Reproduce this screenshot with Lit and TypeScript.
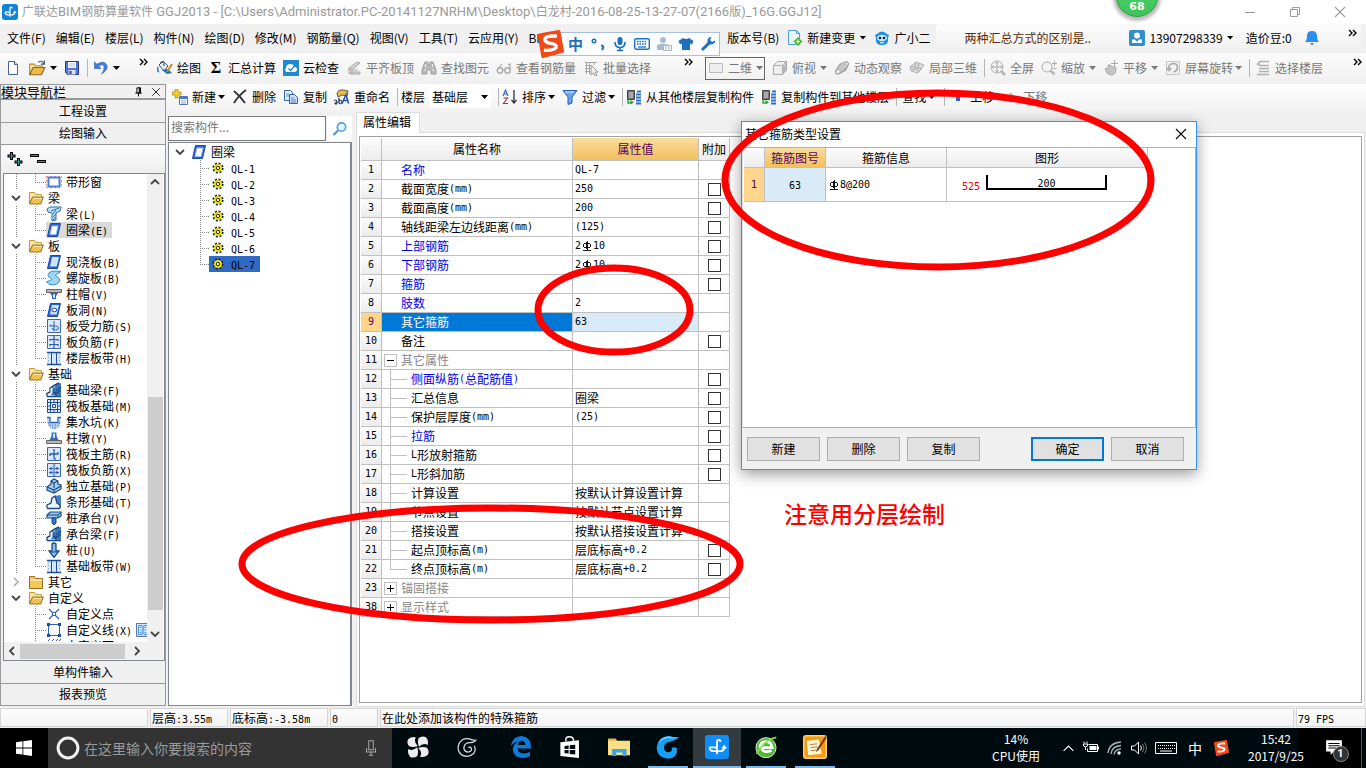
import { LitElement, html, svg, css, nothing } from "lit";
import { customElement } from "lit/decorators.js";
import { classMap } from "lit/directives/class-map.js";

const plate = svg`<path d="M1.500 1.500h13v13h-13z" fill="#dbe8fb" stroke="#3a66c4"/>`;
const folderOpen = svg`<path d="M1.500 14V2.500h5l1 2h6v3" fill="#ffe9a0" stroke="#c29a3f"/><path d="M1.500 14l3-7h11l-3 7z" fill="#f0c050" stroke="#9a7020"/><path d="M5 8.500h8.500" stroke="#ffe9a0"/>`;
const slant = svg`<path d="M4.500 1.500h10l-3 13h-10z" fill="#2b63cc" stroke="#1d4aa8"/>`;
const beam3d = svg`<path d="M5 13l5-11 5-1v13z" fill="#3f76b5"/><path d="M1 14.500h14M1 14.500v-3l3-1.500V6l3-2v6l3 1.500v3M7 4l6-3M10 9l5-4M10 11.500l5-3" fill="none" stroke="#174a86" stroke-width="1.400"/><path d="M4.500 7l2-1.500v6h-2z" fill="#cfe4fb"/>`;
const strip = svg`<path d="M1 3h14v11H1z" fill="#d6e6fb"/><path d="M1 2.500h14M1 14.500h14" stroke="#1c4da0" stroke-width="1.500"/><path d="M5.500 3v11M10.500 3v11" stroke="#1c4da0"/><path d="M2.500 4v9M13.500 4v9" stroke="#7ea4dc" stroke-dasharray="1 2"/>`;
const copyStack = svg`<path d="M1.500 1.500h7v9h-7z" fill="#777" stroke="#444"/><path d="M3 4h4M3 6h4M3 8h4" stroke="#ddd"/><path d="M15 2.500h-4M15 5.500h-5M15 8.500h-5M15 11.500h-5M15 14.500h-5" stroke="#2d6fc4" stroke-width="1.800"/><path d="M4 11l4 2-3 2.500z" fill="#2bab36"/><path d="M2 11v3h3" stroke="#2bab36" stroke-width="1.500" fill="none"/>`;
const hookMark = svg`<path d="M10.300 4.500Q10.300 3.200 9.200 3.200 8 3.200 8 4.500V12.800M3 8.200h3.500Q8 8.200 8 9.500M3 8.200Q3.200 10.800 5.500 10.800h5Q12.800 10.600 12.800 8M11.500 9l1.300-1.500L14 9" fill="none" stroke="#fff" stroke-width="1.200"/>`;

const ICONS: Record<string, unknown> = {
  app: svg`<rect width="16" height="16" rx="3" fill="#0f83d8"/>${hookMark}`,
  page: svg`<path d="M3.500 1.500h6l3 3v10h-9z" fill="#fff" stroke="#44618f"/><path d="M9.500 1.500v3h3" fill="#cfdcf0" stroke="#44618f"/>`,
  open: svg`<path d="M1.500 14V4.500h4l1 1.500h6v2" fill="#ffe591" stroke="#b38a36"/><path d="M1.500 14l3-6.500h10.500l-3 6.500z" fill="#efb94a" stroke="#8b6620"/><path d="M9 3q3-2.500 5 1M14.500 1v3.500h-3" fill="none" stroke="#3c567f"/>`,
  save: svg`<path d="M1.500 1.500h13v13h-11l-2-2z" fill="#5472d8" stroke="#263a94"/><path d="M4 2h8v6H4z" fill="#f4f7ff"/><path d="M5 4h6M5 6h6" stroke="#b9c4e8"/><path d="M4.500 10h7v4.500h-7z" fill="#dfe4f0"/><path d="M5.500 11h2v3h-2z" fill="#263a94"/>`,
  undo: svg`<path d="M1.500 2v6.500h6.500L5.800 6.300Q9.500 3.300 11 6q1 3.500-2.500 8Q15 10 14 5.500 11-.5 4 4.300z" fill="#3f7fe0" stroke="#2558b5" stroke-width=".6"/>`,
  paint: svg`<path d="M2 5l4-4 5 5-4 5z" fill="#e8eef8" stroke="#35537f"/><path d="M1 7q-1 4 1 5" fill="none" stroke="#3171c8" stroke-width="1.500"/><path d="M5 10l5 4 5-1-4-4z" fill="#2b63b4"/><path d="M15 4l-5 8" stroke="#b99027" stroke-width="2"/><path d="M3 3q4-3 4 3" stroke="#333" fill="none"/>`,
  cloud: svg`<path d="M0 0h16v16H0z" fill="#1e88d2"/><path d="M3.500 12Q.8 10.500 3 8q0-4 4.500-4 3 0 3.500 3 3.500 0 3 3-.5 2-2.500 2z" fill="#fff"/><path d="M5.500 8.500l2 2 3.500-4" stroke="#1e88d2" fill="none" stroke-width="1.200"/>`,
  slab: svg`<path d="M2 9l9-7 3 1-7 6zM3 10h9M4 12h10v2H4zM3 10v4M6 10v4" fill="#d4d4d4" stroke="#a8a8a8"/>`,
  bino: svg`<path d="M4 2h3v3h2V2h3l3 8v4h-5v-4H6v4H1v-4z" fill="#b9b9b9" stroke="#9c9c9c"/><path d="M3 10h2M11 10h2M4.500 4v3M11.500 4v3" stroke="#eee"/>`,
  glasses: svg`<circle cx="4" cy="10.500" r="2.700" fill="none" stroke="#aaa" stroke-width="1.400"/><circle cx="11.500" cy="10.500" r="2.700" fill="none" stroke="#aaa" stroke-width="1.400"/><path d="M6.500 10q1-1 2.500 0M2 9l4-5M14 10V4l-2 1" fill="none" stroke="#aaa" stroke-width="1.200"/>`,
  batch: svg`<path d="M2 2.500h12M2 5.500h5M2 8.500h5M2 11.500h5M3.500 2v12M6.500 2v12M11 3v2" stroke="#a5a5a5"/><path d="M8 5l7 7-3 .2 2 3-1.500.8-2-3L8 15z" fill="#eee" stroke="#999"/>`,
  plane: svg`<path d="M1.500 3.500h13v9h-13z" fill="#eee" stroke="#bbb"/>`,
  cube: svg`<path d="M1.500 5.500l4-4h9v9l-4 4h-9z" fill="#eee" stroke="#aaa"/><path d="M1.500 5.500h9v9M10.500 5.500l4-4" fill="none" stroke="#aaa"/><path d="M11 6l3-3v8l-3 3z" fill="#bbb"/>`,
  orbit: svg`<circle cx="8.500" cy="7.500" r="5" fill="#bdbdbd"/><ellipse cx="8" cy="8" rx="8" ry="3" transform="rotate(-42 8 8)" fill="none" stroke="#a4a4a4" stroke-width="1.300"/><path d="M5 8l5-5M7 10l5-5" stroke="#e8e8e8"/>`,
  part3d: svg`<path d="M1 7l6-5 8 3-6 8-7-2z" fill="#ddd" stroke="#b0b0b0"/><path d="M7 2l-1 5-5 0M6 7l4 5M10 3L9 8l4 1M3 10l6-2" fill="none" stroke="#aaa"/>`,
  full: svg`<circle cx="7" cy="7" r="6" fill="#f4f4f4" stroke="#aaa"/><path d="M7 2v10M2 7h10M5.500 3.500L7 2l1.500 1.500M5.500 10.500L7 12l1.500-1.500M3.500 5.500L2 7l1.500 1.500M10.500 5.500L12 7l-1.500 1.500" fill="none" stroke="#aaa"/><path d="M11 11l4 4" stroke="#b5b5b5" stroke-width="2.500"/>`,
  zoom: svg`<circle cx="6" cy="7" r="5" fill="#f4f4f4" stroke="#aaa"/><path d="M9.500 10.500l4 4" stroke="#b5b5b5" stroke-width="2.500"/><path d="M11 3.500h5M13.500 1v5M11.500 8.500h4" stroke="#aaa"/>`,
  hand: svg`<path d="M2 9q2-2 3 0V5q2-1 2 1 2-1 3 1 3-1 3 2 0 6-5 6-4 0-6-6z" fill="#c4c4c4" stroke="#aaa"/><path d="M11.500 0v7M8 3.500h7" stroke="#aaa"/>`,
  rotate: svg`<path d="M1.500 1.500h13v13h-13z" fill="#f2f2f2" stroke="#c4c4c4"/><path d="M4 9q-1-5 4-5.500 5 0 4.500 4.500-.5 3-4 4M1.500 8L4 10.500 6.500 8" fill="none" stroke="#aaa" stroke-width="1.700"/>`,
  floors: svg`<path d="M2 4.500l3-3h9M4 5.500h10M4 8.500h10M4 11.500h10M2 14.500h12M2 4.500h3" fill="none" stroke="#b0b0b0" stroke-width="1.500"/>`,
  add: svg`<path d="M3 0h3v3h3v3H6v3H3V6H0V3h3z" fill="#f5cf30" stroke="#a2811a" stroke-width=".7"/><path d="M7.500 7.500h8v8h-8z" fill="#fff" stroke="#5474ae"/><path d="M8 8h7v2H8z" fill="#4a7edc"/><path d="M9 12h5M9 14h5" stroke="#8aa2cc"/>`,
  del: svg`<path d="M2 2q6 5 11 12M14 1Q7 6 2 14" fill="none" stroke="#333" stroke-width="1.800"/>`,
  copy: svg`<path d="M1.500 1.500h6l2 2v8h-8z" fill="#e6efff" stroke="#3462b5"/><path d="M6.500 5.500h5l3 3v6h-8z" fill="#cfe0ff" stroke="#3462b5"/><path d="M3 5h3M3 7h3M8 9h3M8 11h5M8 13h5" stroke="#5d86d0"/>`,
  rename: svg`<path d="M3 4q2-4 6-3l5 1-1 5-5-1-4 2z" fill="#e8bb55" stroke="#6d5424"/><path d="M5 9v5M8 14.500l4-9 2.500 9M9.500 11.500h4" fill="none" stroke="#2856ad" stroke-width="1.600"/><path d="M0 12q2-2 3 0v3H1q-1-1 2-2M5 12q3-2 3 1t-3 1" fill="none" stroke="#222"/>`,
  filter: svg`<path d="M1 1.500h14L10 8v6l-4 1.500V8z" fill="#6ba5ee" stroke="#2360b4"/><path d="M3 3h9" stroke="#d4e7ff"/>`,
  sort: svg`<path d="M1 7l2.500-6L6 7M2 5h3" fill="none" stroke="#2c5fc4" stroke-width="1.100"/><path d="M12 1v12M9.500 11l2.500 3 2.500-3" fill="none" stroke="#333" stroke-width="1.300"/><path d="M1.500 9h4L1.500 14.500h4.500" stroke="#a42f4e" fill="none" stroke-width="1.100"/>`,
  fromFloor: copyStack,
  toFloor: copyStack,
  up: svg`<path d="M8 2l5 5h-3v5H6V7H3z" fill="#2f62cc"/>`,
  down: svg`<path d="M8 14l5-5h-3V4H6v5H3z" fill="#c4c4c4"/>`,
  newDoc: svg`<path d="M1.500.5h8l3 3v11h-11z" fill="#e9f6ff" stroke="#4da0cf"/><path d="M9.500.5v3h3" fill="none" stroke="#4da0cf"/><path d="M11 7l4.500 4.500L11 16l-4.500-4.500z" fill="#50b830"/><path d="M11 9.500v4M9 11.500h4" stroke="#eaffdf" stroke-width="1.200"/>`,
  mascot: svg`<path d="M3 4q5-5 10 0l2 1-1 3q1 7-6 7T2 8L1 5z" fill="#1d8fe0"/><ellipse cx="8" cy="8" rx="5" ry="3.300" fill="#c9ecff"/><circle cx="6" cy="8" r="1.300" fill="#123"/><circle cx="10" cy="8" r="1.300" fill="#123"/><path d="M6 12.500q2 1 4 0" stroke="#fff" fill="none"/>`,
  user: svg`<rect width="16" height="16" rx="2" fill="#2f8fcb"/><circle cx="8" cy="5.500" r="3" fill="#fff"/><path d="M3 13V9.500h3L8 12l2-2.500h3V13z" fill="#fff"/>`,
  bell: svg`<path d="M8 1q5 0 5 5 0 4 2 6H1q2-2 2-6 0-5 5-5z" fill="#2a8df0"/><path d="M6 13h4l-2 2.500z" fill="#2a8df0"/>`,
  search: svg`<circle cx="9.500" cy="6" r="4.200" fill="#eaf5ff" stroke="#53a3dc" stroke-width="1.700"/><path d="M6 9.500L1.500 14" stroke="#4a94d0" stroke-width="2.200"/>`,
  plus2: svg`<path d="M4.500 1v8M.5 5h8M11.500 7v8M7.500 11h8" stroke="#000" stroke-width="3"/><path d="M4.500 2v6M1.500 5h6M11.500 8v6M8.500 11h6" stroke="#2a9d97"/>`,
  minus2: svg`<path d="M0 4.500h9M7 10.500h9" stroke="#000" stroke-width="3"/><path d="M1 4.500h7M8 10.500h7" stroke="#2a9d97"/>`,
  folderOpen,
  folder: svg`<path d="M1.500 14.500v-12h5l1 2h7v10z" fill="#f3c75a" stroke="#9a7020"/><path d="M2 6h12" stroke="#ffeeb0" stroke-width="1.500"/>`,
  window: svg`<path d="M.5 2v12M15.500 2v12M0 2.500h16M0 13.500h16" stroke="#ef8f86" stroke-dasharray="2 2"/><path d="M2.500 3.500h11v9h-11z" fill="#fff" stroke="#4b7fd8" stroke-width="2"/>`,
  beam: svg`<path d="M1 3l3-2h11l-1 4-4 2v7l-4 1V7L2 6z" fill="#bfe0f8" stroke="#2a6cae"/><path d="M5 5l8-3M7 8l3-4M7 11l3-3M7 14l3-3" stroke="#2a6cae"/>`,
  ring: svg`${slant}<path d="M6 4h6l-2 8.500H4z" fill="#fff" stroke="#9cc0f4"/>`,
  panel: svg`${slant}<path d="M6 3h7l-2.300 9.500H4z" fill="#cfe5fd"/>`,
  spiral: svg`<path d="M15 1.500Q6 0 3 3q-2.500 3 1.500 5 3 1.500-1 2.500L.5 12q4 4.500 10 2 6-4 1-7-3.500-1.500-1-3 2-1 4.500-2.500z" fill="#9ed6f6" stroke="#2f8dcb"/>`,
  cap: svg`<path d="M.5 3.500h15v3H.5z" fill="#b8b8b8" stroke="#666"/><path d="M4 7h8l-2 3v3H6v-3z" fill="#2760c4"/><path d="M7 8h2v4H7z" fill="#d5e6ff"/>`,
  hole: svg`${slant}<path d="M6 3h7l-2.300 9.500H4z" fill="#cfe5fd"/><ellipse cx="8.300" cy="8" rx="2.500" ry="1.800" fill="#fff" stroke="#1d4aa8"/>`,
  rebarS: svg`${plate}<path d="M8 3v10M5 6.500L3.500 8h6q3 0 3 2t-3 2M9 12q-3 0-3-2" fill="none" stroke="#2857b8"/>`,
  rebarF: svg`${plate}<path d="M8 2v12M4 5.500h8M4 10.500h8M4 5v2M12 5v2M4 10v2M12 10v2" fill="none" stroke="#2857b8" stroke-width="1.200"/>`,
  rebarR: svg`${plate}<path d="M8 3v9q0 1 2 1M4 10V8h8V6" fill="none" stroke="#2857b8" stroke-width="1.300"/>`,
  rebarX: svg`${plate}<path d="M8 2v12M3 6.500h10M3 10.500h10M5 5v3M11 5v3M5 9v3M11 9v3" fill="none" stroke="#2857b8" stroke-width="1.200"/><path d="M6.500 2h3v12h-3z" fill="#88a8d8" opacity=".6"/>`,
  strip,
  beam3d,
  raft: svg`<path d="M1.500 1.500h13v13h-13zM1 4.500h14M1 11.500h14M4.500 1v14M11.500 1v14M6.500 6.500h3v3h-3zM8 1v3M8 12v3M1 8h3M12 8h3" fill="#e2eefc" stroke="#1c4da0"/>`,
  pit: svg`<path d="M1 4h3v4h8V4h3q0 10-7 10T1 4z" fill="#bcd9f8"/><path d="M1 3.500h3v5h8v-5h3" fill="none" stroke="#2f62b8" stroke-width="1.300"/><path d="M2 8q1 6.500 6 6.500T14 8" fill="none" stroke="#2f62b8" stroke-dasharray="1.500 1"/><path d="M4 11h8M6 13h4" stroke="#2f62b8" stroke-dasharray="1 1.500"/>`,
  pier: svg`<path d="M.5 10.500h15v3H.5z" fill="#b8b8b8" stroke="#666"/><path d="M3.500 10l2-4V2.500h5V6l2 4z" fill="#2f6cd0"/><path d="M7 3.500h2V8H7z" fill="#d5e6ff"/>`,
  isolated: svg`<path d="M1 9l4-3V3l3-2 4 2v3l3 1v4l-7 4-7-3z" fill="#a8cdf2" stroke="#174a86" stroke-width="1.200"/><path d="M5 3l3 2v5M8 5l4-2M1 9l7 3 7-4M8 12v3" fill="none" stroke="#174a86" stroke-width="1.200"/>`,
  stripBase: svg`<path d="M9 2l5-1 1 1v12h-3z" fill="#4a80bd"/><path d="M1 14.500h13M1 14v-3l4-2 1-5 3-2 2 7 3 2v3" fill="#eaf3ff" stroke="#174a86" stroke-width="1.300"/>`,
  pileCap: svg`<path d="M1 5l3-3h11v4l-3 2H1z" fill="#9cc6f0" stroke="#174a86" stroke-width="1.200"/><path d="M1 5h11v3M12 5l3-3" fill="none" stroke="#174a86"/><path d="M6 8h4v5l-2 2-2-2z" fill="#3a76b9" stroke="#174a86"/>`,
  pile: svg`<path d="M6 2q2-2 4 0v7h3l-5 6.500L3 9h3z" fill="#8fbdec" stroke="#174a86" stroke-width="1.300"/><path d="M4 10h8" stroke="#174a86"/>`,
  point: svg`<path d="M3 3l10 10M13 3L3 13" stroke="#2b62c0" stroke-width="1.200"/><circle cx="8" cy="8" r="1.700" fill="#fff" stroke="#2b62c0"/>`,
  line: svg`<path d="M3 2.500h10M3 13.500h10M2.500 3v10M13.500 3v10" stroke="#2b62c0"/><path d="M1 1h3v3H1zM12 1h3v3h-3zM1 12h3v3H1zM12 12h3v3h-3z" fill="#1c4da0"/>`,
  face: svg`<path d="M2 3l2-2M6 3l2-2M10 3l2-2M13 3l2-2" stroke="#2b62c0"/>`,
  gear: svg`<circle cx="8" cy="8" r="5.300" fill="none" stroke="#222" stroke-width="4.400" stroke-dasharray="2.300 1.860"/><circle cx="8" cy="8" r="4.300" fill="#f4e800" stroke="#e8dc00" stroke-width="2"/><circle cx="8" cy="8" r="2.200" fill="#fff7a0" stroke="#222" stroke-width="1.300"/>`,
  mini: svg`<path d="M.5.5h15v15H.5z" fill="#cfe5ff" stroke="#3c5f9a"/><path d="M3 3h4v10H3zM9 3h4v10H9z" fill="#fff" stroke="#2a7fe0"/><path d="M4 5h2M4 8h2M4 11h2M10 5h2M10 8h2M10 11h2" stroke="#2a7fe0"/>`,
  pin: svg`<path d="M6 3.500h4v6H6zM9 3.500h1.500v6H9zM4 10h8M8 10v4" fill="none" stroke="#000" stroke-width="1.200"/>`,
  close: svg`<path d="M3 3l10 10M13 3L3 13" stroke="currentColor" stroke-width="1.100"/>`,
  minimise: svg`<path d="M3 8.500h10" stroke="currentColor"/>`,
  restore: svg`<path d="M3.500 5.500h7v7h-7zM5.500 5.500v-2h7v7h-2" fill="none" stroke="currentColor"/>`,
  chevDown: svg`<path d="M4 6l4 4 4-4" fill="none" stroke="#444" stroke-width="1.800"/>`,
  chevUp: svg`<path d="M4 10l4-4 4 4" fill="none" stroke="#444" stroke-width="1.800"/>`,
  chevLeft: svg`<path d="M10 4L6 8l4 4" fill="none" stroke="#444" stroke-width="1.800"/>`,
  chevRight: svg`<path d="M6 4l4 4-4 4" fill="none" stroke="#444" stroke-width="1.800"/>`,
  chevClosed: svg`<path d="M6 4l4 4-4 4" fill="none" stroke="#aaa" stroke-width="1.500"/>`,
  rebar: svg`<path d="M3 3.500h6M3 7.500h6M2.500 4v3M9.500 4v3M6.500 1v9M5.500 2v7M2 10.500h8" fill="none" stroke="#000" stroke-width=".9"/>`,
  more: svg`<path d="M4 3l3 3-3 3M8 3l3 3-3 3" fill="none" stroke="#000" stroke-width="1.400"/>`,
  // input method bar
  sogou: svg`<path d="M2 3l11-2 2 11-11 3z" fill="#f04a16" stroke="#f04a16" stroke-linejoin="round" stroke-width="2"/><path d="M12 3.500Q5 3 5 5.800 6 7.500 9 7.800q3 .4 2.500 2.200Q10 12 4.500 11.500" fill="none" stroke="#fff" stroke-width="1.900"/>`,
  punct: svg`<circle cx="4" cy="5" r="1.800" fill="none" stroke="#1f6fbf" stroke-width="1.400"/><path d="M11 9.500q4 0 1 4.500" fill="none" stroke="#1f6fbf" stroke-width="2.200"/>`,
  mic: svg`<rect x="5.500" y="1" width="5" height="8" rx="2.500" fill="#1f6fbf"/><path d="M3 6q0 5.500 5 5.500T13 6M8 11v4M5 14.500h6" fill="none" stroke="#1f6fbf" stroke-width="1.600"/>`,
  keys: svg`<rect x=".7" y="2.700" width="14.600" height="10.600" rx="1.500" fill="none" stroke="#1f6fbf" stroke-width="1.400"/><path d="M3 5.500h10M3 8h10" stroke="#1f6fbf" stroke-width="1.500" stroke-dasharray="1.500 1"/><path d="M4 11h8" stroke="#1f6fbf" stroke-width="1.300"/>`,
  person: svg`<circle cx="7" cy="4" r="3" fill="#a9bbd0"/><path d="M1 14V9q6-3 12 0v5z" fill="#a9bbd0"/><path d="M7.500 9.500h8v5h-8z" fill="#fff" stroke="#a9b5c4"/><path d="M10 10.500v3M13 10.500v3" stroke="#8897a8"/>`,
  shirt: svg`<path d="M5 2q3 2 6 0l4.500 3L14 8.500l-2-1V14H4V7.500l-2 1L.5 5z" fill="#1f6fbf"/>`,
  wrench: svg`<path d="M2 14l7-7" stroke="#1f6fbf" stroke-width="3"/><path d="M9 1.500Q6.500 4 8 8q4 1.500 7-1.500l0-2-3 1.500-2-2L11.500 1z" fill="#1f6fbf"/>`,
  // taskbar
  win: svg`<path d="M0 2.200L6.500 1.300v6.200H0zM7.300 1.200L16 0v7.500H7.300zM0 8.400h6.500v6.200L0 13.700zM7.300 8.400H16V16l-8.700-1.200z" fill="#fff"/>`,
  ringO: svg`<circle cx="8" cy="8" r="6.600" fill="none" stroke="#f2f2f2" stroke-width="2"/>`,
  micLine: svg`<path d="M6 1.500h4v8H6zM4 8v3.500h8V8M8 11.500v3M6 14.500h4" fill="none" stroke="#aaa" stroke-width=".9"/>`,
  clover: svg`<g fill="#ececec"><path d="M7.800 7.300Q4.500 8.700 1.500 7.500-.5 5 .8 2.300 3.500 0 6.500 1q-2 3 1.300 6.300z"/><path d="M8.700 7.800Q7.300 4.500 8.500 1.500 11-.5 13.700.8 16 3.500 15 6.500q-3-2-6.300 1.300z"/><path d="M8.200 8.700Q11.500 7.300 14.500 8.500q2 2.500.7 5.200-2.700 2.300-5.700 1.300 2-3-1.300-6.300z"/><path d="M7.300 8.200Q8.700 11.500 7.500 14.500 5 16.500 2.300 15.200 0 12.500 1 9.500q3 2 6.300-1.300z"/></g>`,
  swirl: svg`<path d="M15.500 2.500Q13.500 4.500 10.500 4.500 6 4.500 5.500 8.500q.2 3.500 3.500 3.500 3-.3 2.500-3-1-1.500-2.500-.5M15.500 2.500Q13 3 10 1.500 4 .5 1.500 5.500-.5 11 4 14.500q5.500 2.500 9.500-1.500 2-3 .2-6" fill="none" stroke="#d8dddd"/>`,
  swirlBlue: svg`<path d="M15.500 1.500Q12 4 9.500 4.500 6 4.800 5.300 8q0 3.500 3 3.500 2.800-.3 2.300-3 2-1 3.400.5Q14.500 15.500 8 15.800.5 15 .5 8 1.500.5 9 .8q3.500 1 6.500.7z" fill="#17a0f5"/><path d="M9 .8q-6 0-7.500 5 3-4 8.500-3.500 3 0 5.500-.8-3.500.5-6.500-.7z" fill="#6ad0ff"/>`,
  edge: svg`<path d="M.5 7.500Q2 0 8.500 0 15.500.8 15.300 9H5.500q.5 3.500 4.500 3.700 2.500 0 4.500-1.200v3.300Q12 16 9 16 2.500 15.500 2 9.800 2.300 6 6 4 2.500 4.500.5 7.500zM5.700 6.500h5.500Q11 3.600 8.500 3.500 6 3.700 5.700 6.500z" fill="#0c7bdc"/>`,
  store: svg`<path d="M1 4.500L14.500 3v13L1 14.500z" fill="#fff"/><path d="M5 4V2.500Q5 .5 7.500.5t3 2V4" fill="none" stroke="#fff"/><path d="M4 7.200l3-.3v2.500H4zM7.800 6.800l4-.4v3h-4zM4 10.200h3v2.600l-3-.3zM7.800 10.200h4v3.200l-4-.4z" fill="#000b0f"/>`,
  explorer: svg`<path d="M0 14V2h5.500l1 1.500H16V14z" fill="#fbdf86"/><path d="M0 2h5.500l1 1.500H0z" fill="#e8b84a"/><path d="M3 14.500V9.500h10.500v5h-3v-2.500h-4.500v2.500z" fill="#3aa5de"/>`,
  cad: svg`<rect width="16" height="16" rx="2" fill="#0f8cf5"/>${hookMark}`,
  green: svg`<circle cx="8" cy="8.500" r="7.300" fill="#4db834" stroke="#d6f5c8" stroke-width=".7"/><path d="M3.500 8.500Q4 4 8 4t4.500 4.500h-8Q6 13 12 10.500" fill="none" stroke="#fff" stroke-width="2"/><path d="M1 13Q8 2 15.500 1" fill="none" stroke="#8ede50" stroke-width="1.200"/>`,
  note: svg`<rect x=".5" y=".5" width="15" height="15" rx="1.500" fill="#f59a13" stroke="#ffd36b"/><path d="M2.500 4l8-1 2 9.500-9 1z" fill="#fff6d8"/><path d="M4.500 6.500l5-.6M5 8.500l5-.6M5 10.500l4-.5" stroke="#b58a4a" stroke-width=".7"/><path d="M15 .5L9.500 9l-1 2.500 2-1.500L15.700 2z" fill="#8a3412"/>`,
  trayUp: svg`<path d="M2 11l6-6 6 6" fill="none" stroke="#fff" stroke-width="1.400"/>`,
  battery: svg`<path d="M5.500 4.500h9v7H4.500v-3M15.500 6.500v3M1 1.500v2M4 1.500v2M.5 4h4v2q-2 2-4 0zM2.500 7v3" fill="none" stroke="#fff"/><path d="M6.500 6h7v4h-7z" fill="#fff"/>`,
  wifi: svg`<path d="M1 13Q2 3 14 2M4 14Q5 6 14 5.500M7 14.500Q8 9 14 8.800" fill="none" stroke="#aeb7b8" stroke-width="1.300"/><circle cx="12" cy="13" r="1.700" fill="#fff"/>`,
  sound: svg`<path d="M.5 6h3l4-4v12l-4-4h-3z" fill="none" stroke="#fff"/><path d="M9.500 5.500q2 2.500 0 5" fill="none" stroke="#fff"/><path d="M11.500 4q3 4 0 8M13.500 2.500q4 5.500 0 11" fill="none" stroke="#777"/>`,
  trayKeys: svg`<path d="M.5 2.500h21v11H.5zM5 11h12" fill="none" stroke="#fff"/><path d="M3 5.500h17M3 8.500h17" stroke="#fff" stroke-dasharray="1 1"/>`,
  action: svg`<path d="M1 1h14v10H8l-3 3v-3H1z" fill="#fff"/><path d="M3 4h10M3 6h10M3 8h7" stroke="#000" stroke-width=".9"/>`,
};

const ic = (name: string, size = 16, vb = "0 0 16 16", w = size) =>
  html`<svg class="ic" width=${w} height=${size} viewBox=${vb} aria-hidden="true">${ICONS[name]}</svg>`;

// Latin runs are set in the half-width monospaced face, ⌀ stands for the rebar grade sign.
const t = (s: string) =>
  s.split(/([\x20-\x7e]+|⌀)/).map((p) =>
    p === "" ? nothing : p === "⌀" ? ic("rebar", 12, "0 0 12 12") : /^[\x20-\x7e]/.test(p) ? html`<span class="m">${p}</span>` : p,
  );

type Tool = { i?: string; l?: string; a?: boolean; off?: boolean; sep?: boolean; tight?: boolean };

const MENU = ["文件(F)", "编辑(E)", "楼层(L)", "构件(N)", "绘图(D)", "修改(M)", "钢筋量(Q)", "视图(V)", "工具(T)", "云应用(Y)", "BIM应用(I)", "在线服务(S)", "帮助(H)", "版本号(B)"];

const DRAW_TOOLS: Tool[] = [
  { i: "paint", l: "绘图" }, { i: "sum", l: "汇总计算" }, { i: "cloud", l: "云检查" },
  { i: "slab", l: "平齐板顶", off: true }, { i: "bino", l: "查找图元", off: true },
  { i: "glasses", l: "查看钢筋量", off: true }, { i: "batch", l: "批量选择", off: true },
];
const VIEW_TOOLS: Tool[] = [
  { i: "cube", l: "俯视", a: true, off: true }, { i: "orbit", l: "动态观察", off: true }, { i: "part3d", l: "局部三维", off: true },
  { sep: true }, { i: "full", l: "全屏", off: true }, { i: "zoom", l: "缩放", a: true, off: true },
  { i: "hand", l: "平移", a: true, off: true }, { i: "rotate", l: "屏幕旋转", a: true, off: true, tight: true },
  { sep: true }, { i: "floors", l: "选择楼层", off: true },
];
const ITEM_TOOLS: Tool[] = [
  { i: "add", l: "新建", a: true, tight: true }, { i: "del", l: "删除" }, { i: "copy", l: "复制" }, { i: "rename", l: "重命名" }, { sep: true },
];
const LIST_TOOLS: Tool[] = [
  { sep: true }, { i: "sort", l: "排序", a: true, tight: true }, { i: "filter", l: "过滤", a: true, tight: true }, { sep: true },
  { i: "fromFloor", l: "从其他楼层复制构件" }, { i: "toFloor", l: "复制构件到其他楼层" },
];
const MOVE_TOOLS: Tool[] = [
  { sep: true }, { l: "查找", a: true, tight: true }, { sep: true }, { i: "up", l: "上移" }, { i: "down", l: "下移", off: true },
];

// [label, icon, kind]: o = open folder, c = closed folder, otherwise a leaf (e = last leaf)
const NAV: [string, string, string][] = [
  ["带形窗", "window", "e"], ["梁", "folderOpen", "o"], ["梁(L)", "beam", ""], ["圈梁(E)", "ring", "e"],
  ["板", "folderOpen", "o"], ["现浇板(B)", "panel", ""], ["螺旋板(B)", "spiral", ""], ["柱帽(V)", "cap", ""],
  ["板洞(N)", "hole", ""], ["板受力筋(S)", "rebarS", ""], ["板负筋(F)", "rebarF", ""], ["楼层板带(H)", "strip", "e"],
  ["基础", "folderOpen", "o"], ["基础梁(F)", "beam3d", ""], ["筏板基础(M)", "raft", ""], ["集水坑(K)", "pit", ""],
  ["柱墩(Y)", "pier", ""], ["筏板主筋(R)", "rebarR", ""], ["筏板负筋(X)", "rebarX", ""], ["独立基础(P)", "isolated", ""],
  ["条形基础(T)", "stripBase", ""], ["桩承台(V)", "pileCap", ""], ["承台梁(F)", "beam3d", ""], ["桩(U)", "pile", ""],
  ["基础板带(W)", "strip", "e"], ["其它", "folder", "c"], ["自定义", "folderOpen", "o"],
  ["自定义点", "point", "z"], ["自定义线(X)", "line", "z"], ["自定义面", "face", "z"],
];

// [number, name, value, checkbox, kind]: b = blue, g = group, k = child, l = last child
const PROPS: [number, string, string, boolean, string][] = [
  [1, "名称", "QL-7", false, "b"], [2, "截面宽度(mm)", "250", true, ""], [3, "截面高度(mm)", "200", true, ""],
  [4, "轴线距梁左边线距离(mm)", "(125)", true, ""], [5, "上部钢筋", "2⌀10", true, "b"], [6, "下部钢筋", "2⌀10", true, "b"],
  [7, "箍筋", "", true, "b"], [8, "肢数", "2", false, "b"], [9, "其它箍筋", "63", false, "s"], [10, "备注", "", true, ""],
  [11, "其它属性", "", false, "g-"], [12, "侧面纵筋(总配筋值)", "", true, "bk"], [13, "汇总信息", "圈梁", true, "k"],
  [14, "保护层厚度(mm)", "(25)", true, "k"], [15, "拉筋", "", true, "bk"], [16, "L形放射箍筋", "", true, "k"],
  [17, "L形斜加筋", "", true, "k"], [18, "计算设置", "按默认计算设置计算", false, "k"],
  [19, "节点设置", "按默认节点设置计算", false, "k"], [20, "搭接设置", "按默认搭接设置计算", false, "k"],
  [21, "起点顶标高(m)", "层底标高+0.2", true, "k"], [22, "终点顶标高(m)", "层底标高+0.2", true, "kl"],
  [23, "锚固搭接", "", false, "g+"], [38, "显示样式", "", false, "g+"],
];

@customElement("app-root")
export class AppRoot extends LitElement {
  static styles = css`
    :host { display: block; height: 100vh; font: 12px/16px "Noto Sans CJK SC", sans-serif; color: #000; }
    * { box-sizing: border-box; }
    button, input, select { font: inherit; color: inherit; margin: 0; padding: 0; border: 0; background: none; border-radius: 0; white-space: nowrap; }
    select { appearance: none; outline: none; }
    .ic { display: block; flex: none; }
    .m { font: 10px/16px "DejaVu Sans Mono", monospace; white-space: pre; }
    .app { position: relative; display: grid; grid-template-rows: 24px 29px 30px minmax(0, 1fr) 21px 40px; height: 100%; overflow: hidden; background: #f0f0f0; white-space: nowrap; }

    .title { display: flex; align-items: center; padding: 0 4px 0 2px; background: #fff; color: #999; gap: 4px; }
    .title h1 { flex: 1; margin: 0; font: 13px/22px Roboto, "Noto Sans CJK SC", sans-serif; }
    .title .zh { font-size: 12px; }
    .winbtn { width: 45px; height: 22px; display: grid; place-items: center; }
    .wins { display: flex; }

    .menu { display: flex; align-items: center; padding: 0 5px 2px 7px; }
    .menu nav { display: flex; gap: 10px; }
    .menu nav button:last-child { margin-left: 8px; }
    .menu .pair { display: flex; align-items: center; gap: 4px; margin-left: 8px; }
    .strip { align-self: stretch; display: flex; align-items: center; background: linear-gradient(#fbfbfb, #f1f1f1); border-radius: 3px; }
    .tip { flex: 1 1 188px; max-width: 188px; margin-left: 6px; padding-left: 28px; color: #5a2a00; }
    .acct { flex: 1; gap: 4px; padding-left: 5px; }
    .acct .bean, .acct .bell { margin-left: 8px; }
    .arrow { width: 7px; height: 4px; background: currentColor; clip-path: polygon(0 0, 100% 0, 50% 100%); flex: none; }
    .chev { align-self: flex-start; margin-left: auto; padding-top: 3px; }

    .bar { display: flex; align-items: center; background: linear-gradient(#fbfbfb, #f0f0f0); }
    .quick { display: flex; align-items: center; gap: 7px; padding-left: 5px; width: 152px; height: 100%; }
    .tools { display: flex; align-items: center; gap: 7px; height: 100%; padding: 0 5px; }
    .tool { display: flex; align-items: center; gap: 4px; }
    .off { color: #777; }
    .sep { width: 1px; height: 18px; background: #b5b5b5; margin-right: -2px; }
    .tight { gap: 4px; }
    .tight .arrow { margin-left: -2px; }
    .sum { width: 16px; text-align: center; font: bold 16px/16px "Liberation Serif", serif; }
    .view { flex: 1; padding: 0; }
    .drawstrip { width: 553px; }
    .drawstrip .chev { margin-right: 3px; }
    .dim { display: flex; align-items: center; gap: 4px; border: 1px solid #666; height: 23px; padding: 0 3px 0 2px; width: 60px; color: #777; }
    .dim select { flex: 1; width: 24px; }

    .main { display: grid; grid-template-columns: 167px 189px minmax(0, 1fr); grid-template-rows: 28px minmax(0, 1fr); min-height: 0; padding-top: 1px; }
    .side { grid-row: 1 / 3; display: flex; flex-direction: column; min-height: 0; padding: 0 1px 1px 0; }
    .side h2 { display: flex; align-items: center; margin: 0; height: 15px; border: 1px solid #999; font: 13px/13px "Noto Sans CJK SC", sans-serif; }
    .side h2 span { flex: 1; }
    .side h2 button { width: 18px; display: grid; place-items: center; }
    .stack { flex: 1; display: flex; flex-direction: column; min-height: 0; border: 1px solid #999; border-bottom: 0; padding: 1px 0 0; }
    .stack > button { height: 22px; border-bottom: 1px solid #999; background: #f0f0f0; flex: none; padding-bottom: 1px; }
    .fold { display: flex; align-items: center; gap: 7px; height: 28px; padding-left: 6px; flex: none; background: linear-gradient(#fcfcfc, #eee); }
    .treebox { flex: 1; min-height: 0; margin: 0 0 1px 2px; border: 1px solid #828790; display: grid; grid-template-columns: minmax(0, 1fr) 16px; grid-template-rows: minmax(0, 1fr) 18px; background: #fff; padding-right: 1px; }
    .tree { margin: 0; padding: 0; list-style: none; overflow: hidden; }
    .tree li { display: flex; align-items: center; height: 16px; }
    .g1 { width: 24px; height: 16px; flex: none; display: grid; justify-items: center; background: repeating-linear-gradient(#888 0 1px, transparent 1px 2px) 12px 0 / 1px 16px no-repeat; }
    .none, .fol .g1 { background: none; }
    .g2 { width: 18px; height: 16px; flex: none; background: repeating-linear-gradient(#888 0 1px, transparent 1px 2px) 7px 0 / 1px 16px no-repeat, repeating-linear-gradient(90deg, #888 0 1px, transparent 1px 2px) 7px 8px / 11px 1px no-repeat; }
    .e .g2 { background-size: 1px 8px, 11px 1px; }
    .lab { padding: 0 4px; height: 16px; }
    .node { display: flex; align-items: center; }
    .cur { background: #d9d9d9; }
    .vs { display: flex; flex-direction: column; background: #f0f0f0; align-items: center; }
    .vs i { width: 15px; background: #cdcdcd; height: 213px; margin-top: auto; }
    .vs .ic:last-child { margin: 16px 0 0; }
    .hs { grid-column: 1 / 3; display: flex; align-items: center; background: #f0f0f0; padding-right: 18px; }
    .hs i { flex: 1; height: 15px; background: #cdcdcd; }
    .hs .ic:last-child { margin-left: 4px; }

    .items { grid-column: 2 / 4; background: linear-gradient(#fdfdfd, #f2f2f2); padding-bottom: 2px; }
    .items .sep { margin-right: -4px; }
    .move { display: flex; align-items: center; gap: 9px; }
    .floor { display: flex; align-items: center; gap: 4px; }
    .combo { display: flex; align-items: center; background: #fff; height: 22px; width: 62px; padding: 0 3px; }
    .combo select { flex: 1; width: 40px; }

    .comp { display: flex; flex-direction: column; min-height: 0; padding: 4px 4px 1px 1px; }
    .find { display: flex; height: 26px; padding-bottom: 1px; }
    .find input { width: 158px; height: 25px; border: 1px solid #7a7a7a; background: #fff; padding: 0 2px 4px; }
    .find input::placeholder { color: #777; opacity: 1; }
    .find button { flex: 1; display: grid; place-items: center; background: #fff; margin-left: 1px; }
    .comptree { flex: 1; border: 1px solid #828790; background: #fff; border-right-width: 2px; padding-top: 1px; }
    .comptree .root .g1 { width: 22px; }
    .comptree .leaf { padding-left: 31px; }
    .comptree .leaf .g2 { width: 9px; background-position: 0 0, 0 8px; }
    .comptree .leaf .node { padding-left: 3px; }
    .comptree .leaf .lab { padding: 0 5px 0 7px; }
    .sel { background: #316ac5; }

    .prop { display: flex; flex-direction: column; min-height: 0; padding-right: 1px; }
    .tab { align-self: flex-start; height: 21px; border: 1px solid #dcdcdc; border-bottom: 0; background: #fff; padding: 1px 8px 0 6px; margin-bottom: -1px; z-index: 1; }
    .sheet { flex: 1; min-height: 0; border: 1px solid #dcdcdc; background: #fff; padding: 3px 2px; }
    .grid { height: 100%; border: 1px solid #a0a0a0; padding: 1px; overflow: hidden; }
    table { border-collapse: separate; border-spacing: 0; table-layout: fixed; }
    th, td { padding: 0; border: 0 solid #c0c0c0; border-width: 0 1px 1px 0; font-weight: normal; height: 19px; line-height: 16px; text-align: left; overflow: hidden; }
    thead th, tbody th { text-align: center; background: linear-gradient(#fcfcfc, #ececec); }
    tbody th .m { display: block; }
    .props { width: 369px; }
    .props thead th { height: 23px; }
    thead .hot { background: linear-gradient(#f9dca0, #f2c05c); color: #5a005a; }
    tbody .hot { background: #ffd58c; color: #5a005a; }
    .name { display: flex; align-items: center; padding-left: 19px; height: 18px; }
    .b { color: #0000f0; }
    .g { color: #888; padding-left: 2px; }
    .k { padding-left: 8px; }
    .k::before { content: ""; width: 17px; margin-right: 4px; height: 18px; background: linear-gradient(#c0c0c0, #c0c0c0) 0 0 / 1px 100% no-repeat, linear-gradient(#c0c0c0, #c0c0c0) 0 9px / 100% 1px no-repeat; }
    .k.l::before { background-size: 1px 9px, 100% 1px; }
    .pm { width: 13px; height: 13px; border: 1px solid #c0c0c0; background: #fff; margin-right: 4px; }
    .val { display: flex; align-items: center; padding-left: 2px; height: 18px; }
    .picked { background: #0078d7; color: #fff; }
    .pickv { background: #d9eaf8; }
    .ck { appearance: none; width: 13px; height: 13px; border: 1px solid #333; background: #fff; display: block; margin: 0 auto; }

    .status { display: flex; gap: 2px; padding: 1px 0; background: #f0f0f0; }
    .status span.c { border: 1px solid #d4d4d4; background: linear-gradient(#fdfdfd, #f2f2f2); line-height: 17px; padding-left: 1px; }
    .s1 { width: 148px; } .s2 { width: 78px; } .s3 { width: 98px; } .s4 { width: 48px; } .s5 { flex: 1; } .s6 { width: 70px; }

    .task { display: flex; background: #000b0f; color: #fff; align-items: stretch; }
    .start { width: 48px; background: #000; display: grid; place-items: center; }
    .cortana { width: 344px; background: #333; display: flex; align-items: center; padding: 0 12px 0 8px; gap: 4px; }
    .cortana input { flex: 1; font-size: 14px; color: #aaa; }
    .cortana input::placeholder { color: #9a9a9a; opacity: 1; }
    .apps { display: flex; padding-left: 2px; gap: 1px; }
    .apps button { width: 48px; display: grid; grid-template-rows: 1fr 2px; place-items: center; }
    .apps .wide { margin-left: 5px; }
    .apps .run::after { content: ""; width: 40px; height: 2px; background: #76b9ed; }
    .apps .act { background: #343b3e; }
    .apps .act::after { width: 48px; }
    .tray { margin-left: auto; display: flex; align-items: center; gap: 8px; }
    .cpu, .clock { text-align: center; font: 12px/17px "Noto Sans CJK SC", sans-serif; padding-bottom: 2px; }
    .cpu { margin-right: 14px; }
    .zh14 { font-size: 14px; margin: 0 3px; }
    .clock { margin-left: 11px; z-index: 1; }
    .note { width: 64px; height: 40px; background: #000; display: flex; align-items: center; justify-content: center; border-right: 1px solid #555; margin: 0 4px 0 -14px; padding-left: 14px; }
    .badge { width: 16px; height: 16px; border-radius: 50%; background: #333; border: 1px solid #888; font: bold 11px/14px Roboto, sans-serif; text-align: center; margin: 12px 0 0 -10px; }

    .ime { position: absolute; left: 536px; top: 30px; display: flex; align-items: center; }
    .ime .row { display: flex; align-items: center; gap: 6px; height: 24px; border: 1px solid #a8bfdb; background: #fafcff; padding: 0 3px 0 22px; margin-left: -19px; }
    .ime .sg { z-index: 1; }
    .ime b { font: bold 15px/16px "Noto Sans CJK SC", sans-serif; color: #1f6fbf; margin-right: 1px; }
    .ball { position: absolute; left: 1114px; top: -27px; width: 46px; height: 46px; border-radius: 50%; border: 2px solid #bbb; background: linear-gradient(#4fd46a, #3fc35b); box-shadow: inset 0 0 0 1px #2b9a45, 0 1px 4px #999; color: #fff; font: bold 11px/16px "DejaVu Sans", sans-serif; text-align: center; padding-top: 24px; }

    .dialog { position: absolute; left: 741px; top: 121px; width: 456px; border: 1px solid #3a92e8; background: #f0f0f0; box-shadow: 0 4px 14px #0006; }
    .dialog header { display: flex; align-items: center; justify-content: space-between; height: 25px; background: #fff; padding: 0 7px 2px 3px; }
    .dialog h2 { margin: 0; font: 12px/16px "Noto Sans CJK SC", sans-serif; }
    .list { height: 281px; border: 1px solid #b0b0b0; border-left-color: #ddd; background: #fff; padding-left: 1px; }
    .list table { width: 404px; }
    .list thead th { height: 20px; }
    .list td, .list tbody th { height: 34px; }
    .shape { display: flex; align-items: flex-start; gap: 6px; padding-left: 15px; }
    .shape .red { color: #e00; margin-top: 2px; }
    .u { width: 121px; height: 15px; border: 2px solid #000; border-top: 0; text-align: center; line-height: 14px; }
    .mid { text-align: center; background: #d9eaf8; }
    .btns { display: flex; gap: 7px; padding: 9px 12px 8px 5px; }
    .btns button { width: 73px; height: 24px; border: 1px solid #adadad; background: #e1e1e1; padding-bottom: 1px; }
    .btns .ok { margin-left: auto; border: 2px solid #0078d7; }
    .memo { position: absolute; left: 784px; top: 497px; margin: 0; color: #f00; font: 500 23px/32px "Noto Sans CJK SC", sans-serif; }
    .marks { position: absolute; left: 0; top: 0; pointer-events: none; }
  `;

  private tool(x: Tool) {
    if (x.sep) return html`<span class="sep"></span>`;
    return html`<button class=${classMap({ tool: true, off: !!x.off, tight: !!x.tight })}>
      ${x.i === "sum" ? html`<span class="sum">Σ</span>` : x.i ? ic(x.i) : nothing}<span>${x.l}</span>${x.a ? html`<span class="arrow"></span>` : nothing}
    </button>`;
  }

  private navRow([label, icon, kind]: [string, string, string]) {
    if (kind === "o" || kind === "c")
      return html`<li class="fol"><span class="g1">${ic(kind === "o" ? "chevDown" : "chevClosed")}</span>${ic(icon)}<span class="lab">${label}</span></li>`;
    return html`<li class=${kind === "e" ? "e" : ""}><span class=${classMap({ g1: true, none: kind === "z" })}></span><span class="g2"></span>
      <span class=${classMap({ node: true, cur: label === "圈梁(E)" })}>${ic(icon)}<span class="lab">${t(label)}</span></span>
      ${label === "自定义线(X)" ? ic("mini", 14) : nothing}</li>`;
  }

  private propRow([n, name, value, check, kind]: [number, string, string, boolean, string]) {
    const sel = kind === "s";
    const group = kind.startsWith("g");
    return html`<tr>
      <th scope="row" class=${sel ? "hot" : ""}><span class="m">${n}</span></th>
      <td class=${sel ? "picked" : ""}><div class=${classMap({ name: true, b: kind.includes("b"), g: group, k: kind.includes("k"), l: kind.includes("l") })}>
        ${group ? html`<svg class="pm" viewBox="0 0 11 11"><path d=${kind === "g+" ? "M2 5.500h7M5.500 2v7" : "M2 5.500h7"} stroke="#000"/></svg>` : nothing}${t(name)}</div></td>
      <td class=${sel ? "pickv" : ""}><div class="val">${t(value)}</div></td>
      <td>${check ? html`<input class="ck" type="checkbox" aria-label=${name + " 附加"}>` : nothing}</td>
    </tr>`;
  }

  private taskApp(icon: string, label: string, cls = "", size = 22) {
    return html`<button class=${cls} aria-label=${label}>${ic(icon, size)}</button>`;
  }

  render() {
    return html`<div class="app">
      <header class="title">${ic("app")}
        <h1><span class="zh">广联达</span>BIM<span class="zh">钢筋算量软件</span> GGJ2013 - [C:\\Users\\Administrator.PC-20141127NRHM\\Desktop\\<span class="zh">白龙村</span>-2016-08-25-13-27-07(2166<span class="zh">版</span>)_16G.GGJ12]</h1>
        <div class="wins">
          <button class="winbtn" aria-label="最小化">${ic("minimise")}</button>
          <button class="winbtn" aria-label="还原">${ic("restore")}</button>
          <button class="winbtn" aria-label="关闭">${ic("close")}</button>
        </div>
      </header>

      <div class="menu">
        <nav>${MENU.map((m) => html`<button>${m}</button>`)}</nav>
        <button class="pair">${ic("newDoc")}<span>新建变更</span><span class="arrow"></span></button>
        <button class="pair">${ic("mascot")}<span>广小二</span></button>
        <div class="strip tip">两种汇总方式的区别是..</div>
        <div class="strip acct">${ic("user")}<span>13907298339</span><span class="arrow"></span><span class="bean">造价豆:0</span><span class="bell">${ic("bell")}</span><span class="chev">${ic("more")}</span></div>
      </div>

      <div class="bar">
        <div class="quick">
          <button aria-label="新建">${ic("page")}</button><button class="tool" aria-label="打开">${ic("open", 18)}<span class="arrow"></span></button>
          <button aria-label="保存">${ic("save")}</button><span class="sep"></span>
          <button class="tool" aria-label="撤销">${ic("undo")}<span class="arrow"></span></button><span class="chev">${ic("more")}</span>
        </div>
        <div class="tools drawstrip">${DRAW_TOOLS.map((x) => this.tool(x))}<span class="chev">${ic("more")}</span></div>
        <div class="tools view">
          <label class="dim">${ic("plane")}<select aria-label="视图维度"><option>二维</option></select><span class="arrow"></span></label>
          ${VIEW_TOOLS.map((x) => this.tool(x))}<span class="chev">${ic("more")}</span>
        </div>
      </div>

      <main class="main">
        <aside class="side">
          <h2><span>模块导航栏</span><button aria-label="固定">${ic("pin", 13)}</button><button aria-label="关闭">${ic("close", 12)}</button></h2>
          <div class="stack">
            <button>工程设置</button><button>绘图输入</button>
            <div class="fold"><button aria-label="全部展开">${ic("plus2")}</button><button aria-label="全部折叠">${ic("minus2")}</button></div>
            <div class="treebox">
              <ul class="tree">${NAV.map((r) => this.navRow(r))}</ul>
              <div class="vs">${ic("chevUp")}<i></i>${ic("chevDown")}</div>
              <div class="hs">${ic("chevLeft")}<i></i>${ic("chevRight")}</div>
            </div>
            <button>单构件输入</button><button>报表预览</button>
          </div>
        </aside>

        <div class="tools items">
          ${ITEM_TOOLS.map((x) => this.tool(x))}
          <label class="floor">楼层<span class="combo"><select><option>基础层</option></select><span class="arrow"></span></span></label>
          ${LIST_TOOLS.map((x) => this.tool(x))}
          <div class="move">${MOVE_TOOLS.map((x) => this.tool(x))}</div>
        </div>

        <section class="comp">
          <div class="find"><input aria-label="搜索构件" placeholder="搜索构件..."><button aria-label="搜索">${ic("search")}</button></div>
          <ul class="tree comptree">
            <li class="fol root"><span class="g1">${ic("chevDown")}</span>${ic("ring")}<span class="lab">圈梁</span></li>
            ${[1, 2, 3, 4, 5, 6, 7].map((n) => html`<li class=${classMap({ leaf: true, e: n === 7 })}><span class="g2"></span>
              <span class=${classMap({ node: true, sel: n === 7 })}>${ic("gear", 12)}<span class="lab">${t("QL-" + n)}</span></span></li>`)}
          </ul>
        </section>

        <section class="prop">
          <div class="tab">属性编辑</div>
          <div class="sheet"><div class="grid">
            <table class="props">
              <colgroup><col width="21"><col width="191"><col width="126"><col width="31"></colgroup>
              <thead><tr><th></th><th>属性名称</th><th class="hot">属性值</th><th>附加</th></tr></thead>
              <tbody>${PROPS.map((r) => this.propRow(r))}</tbody>
            </table>
          </div></div>
        </section>
      </main>

      <footer class="status">
        <span class="c s1"></span><span class="c s2">${t("层高:3.55m")}</span><span class="c s3">${t("底标高:-3.58m")}</span>
        <span class="c s4">${t("0")}</span><span class="c s5">在此处添加该构件的特殊箍筋</span><span class="c s6">${t("79 FPS")}</span>
      </footer>

      <div class="task">
        <button class="start" aria-label="开始">${ic("win")}</button>
        <label class="cortana">${ic("ringO", 24)}<input aria-label="搜索" placeholder="在这里输入你要搜索的内容">${ic("micLine", 18)}</label>
        <div class="apps">
          ${this.taskApp("clover", "应用")}${this.taskApp("swirl", "浏览器", "", 20)}
          ${this.taskApp("edge", "Edge", "wide")}${this.taskApp("store", "应用商店")}${this.taskApp("explorer", "文件资源管理器")}
          ${this.taskApp("swirlBlue", "广联达", "run", 24)}${this.taskApp("cad", "钢筋算量", "run act", 24)}
          ${this.taskApp("green", "安全浏览器", "run")}${this.taskApp("note", "便笺", "run", 24)}
        </div>
        <div class="tray">
          <div class="cpu">14%<br>CPU使用</div>
          ${ic("trayUp", 13)}${ic("battery")}${ic("wifi")}${ic("sound")}${ic("trayKeys", 16, "0 0 22 16", 22)}
          <span class="zh14">中</span>${ic("sogou")}
          <div class="clock">15:42<br>2017/9/25</div>
          <button class="note" aria-label="通知">${ic("action", 18)}<span class="badge">1</span></button>
        </div>
      </div>

      <div class="ime"><span class="sg">${ic("sogou", 28)}</span><div class="row"><b>中</b>${["punct", "mic", "keys", "person", "shirt", "wrench"].map((n) => ic(n))}</div></div>
      <div class="ball">68</div>

      <div class="dialog" role="dialog" aria-label="其它箍筋类型设置">
        <header><h2>其它箍筋类型设置</h2><button aria-label="关闭">${ic("close")}</button></header>
        <div class="list"><table>
          <colgroup><col width="21"><col width="61"><col width="121"><col width="201"></colgroup>
          <thead><tr><th></th><th class="hot">箍筋图号</th><th>箍筋信息</th><th>图形</th></tr></thead>
          <tbody><tr><th scope="row" class="hot"><span class="m">1</span></th><td class="mid">${t("63")}</td>
            <td><div class="val">${t("⌀8@200")}</div></td>
            <td><div class="shape"><span class="red">${t("525")}</span><div class="u">${t("200")}</div></div></td></tr></tbody>
        </table></div>
        <div class="btns"><button>新建</button><button>删除</button><button>复制</button><button class="ok">确定</button><button>取消</button></div>
      </div>

      <p class="memo">注意用分层绘制</p>
      <svg class="marks" width="1366" height="768" viewBox="0 0 1366 768" fill="none" stroke="#f00" stroke-width="7" aria-hidden="true">
        <ellipse cx="938" cy="180" rx="213" ry="87"/><ellipse cx="614" cy="310" rx="76" ry="42"/><ellipse cx="491" cy="564" rx="249" ry="56"/>
      </svg>
    </div>`;
  }
}
